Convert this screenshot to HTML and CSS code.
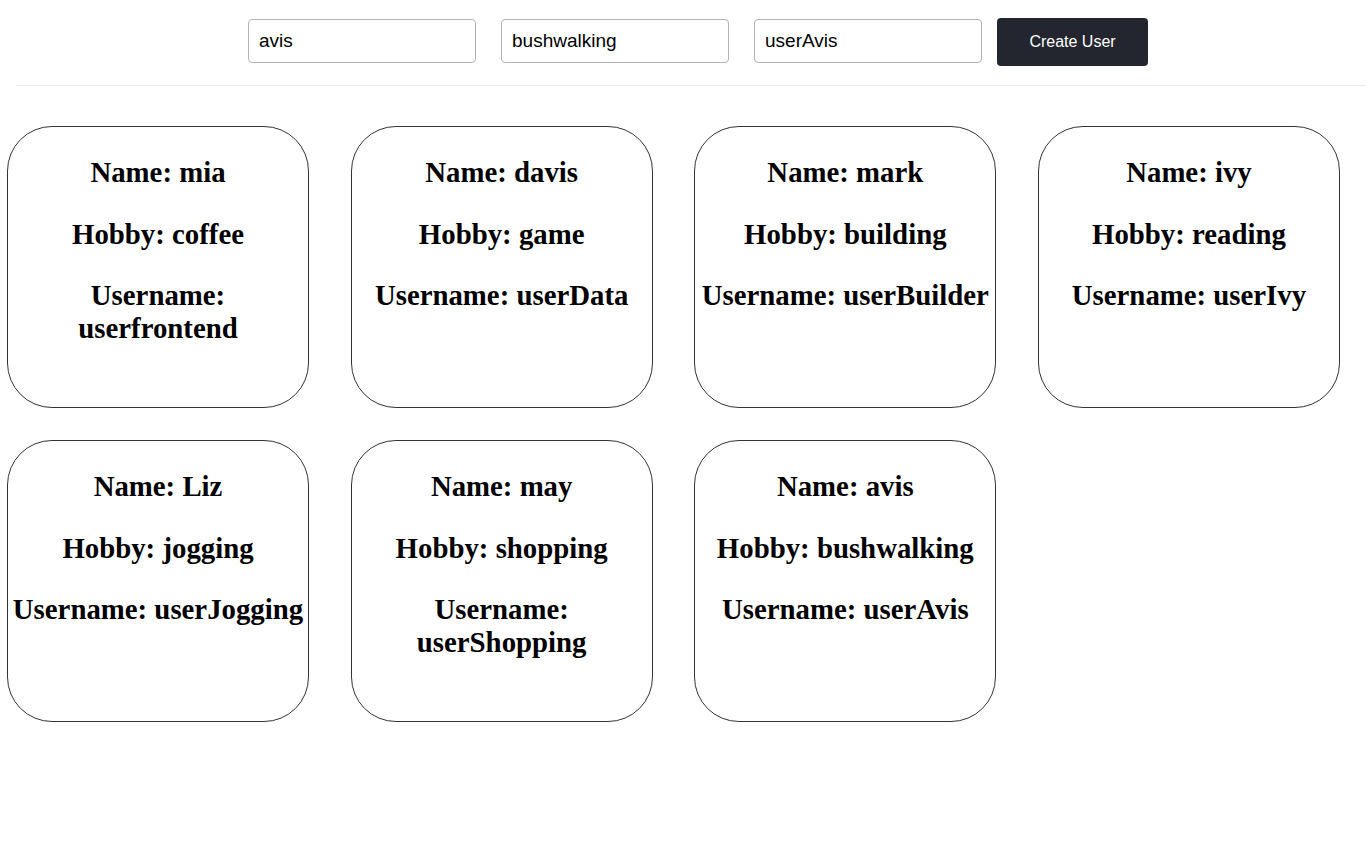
FILE: index.html
```html
<!DOCTYPE html>
<html lang="en">
<head>
<meta charset="utf-8">
<title>Users</title>
<link rel="stylesheet" href="styles.css">
</head>
<body>
<form class="toolbar">
  <input class="field" type="text" value="avis">
  <input class="field" type="text" value="bushwalking">
  <input class="field" type="text" value="userAvis">
  <button class="create-btn" type="button">Create User</button>
</form>
<hr class="divider">
<main class="cards">
  <div class="card"><h2>Name: mia</h2><h2>Hobby: coffee</h2><h2>Username: userfrontend</h2></div>
  <div class="card"><h2>Name: davis</h2><h2>Hobby: game</h2><h2>Username: userData</h2></div>
  <div class="card"><h2>Name: mark</h2><h2>Hobby: building</h2><h2>Username: userBuilder</h2></div>
  <div class="card"><h2>Name: ivy</h2><h2>Hobby: reading</h2><h2>Username: userIvy</h2></div>
  <div class="card"><h2>Name: Liz</h2><h2>Hobby: jogging</h2><h2>Username: userJogging</h2></div>
  <div class="card"><h2>Name: may</h2><h2>Hobby: shopping</h2><h2>Username: userShopping</h2></div>
  <div class="card"><h2>Name: avis</h2><h2>Hobby: bushwalking</h2><h2>Username: userAvis</h2></div>
</main>
</body>
</html>
```
FILE: styles.css
```css
html, body {
  margin: 0;
  padding: 0;
  background: #ffffff;
}

body {
  font-family: "Liberation Serif", "Times New Roman", serif;
  color: #000;
}

.toolbar {
  display: flex;
  align-items: flex-start;
  gap: 25px;
  padding: 18px 0 19px 248px;
  margin: 0;
}

.field {
  box-sizing: border-box;
  width: 228px;
  height: 44px;
  margin: 1px 0 0 0;
  padding: 0 10px;
  border: 1px solid #b3b3b3;
  border-radius: 4px;
  font-family: "Liberation Sans", Arial, sans-serif;
  font-size: 19px;
  color: #000;
  background: #fff;
}

.create-btn {
  box-sizing: border-box;
  width: 151px;
  height: 48px;
  margin: 0 0 0 -10px;
  border: none;
  border-radius: 4px;
  background: #23262e;
  color: #fff;
  font-family: "Liberation Sans", Arial, sans-serif;
  font-size: 16px;
  cursor: pointer;
}

.divider {
  margin: 0 0 0 16px;
  border: none;
  border-top: 1px solid #e8e8e8;
  height: 0;
}

.cards {
  display: grid;
  grid-template-columns: repeat(4, 302px);
  column-gap: 41.67px;
  row-gap: 32px;
  padding: 40px 0 0 7px;
}

.card {
  box-sizing: border-box;
  width: 302px;
  height: 282px;
  border: 1px solid #333;
  border-radius: 45px;
  text-align: center;
  overflow: hidden;
}

.card h2 {
  font-size: 28.8px;
  font-weight: bold;
  line-height: 33px;
  margin: 28.8px 0;
}
```
